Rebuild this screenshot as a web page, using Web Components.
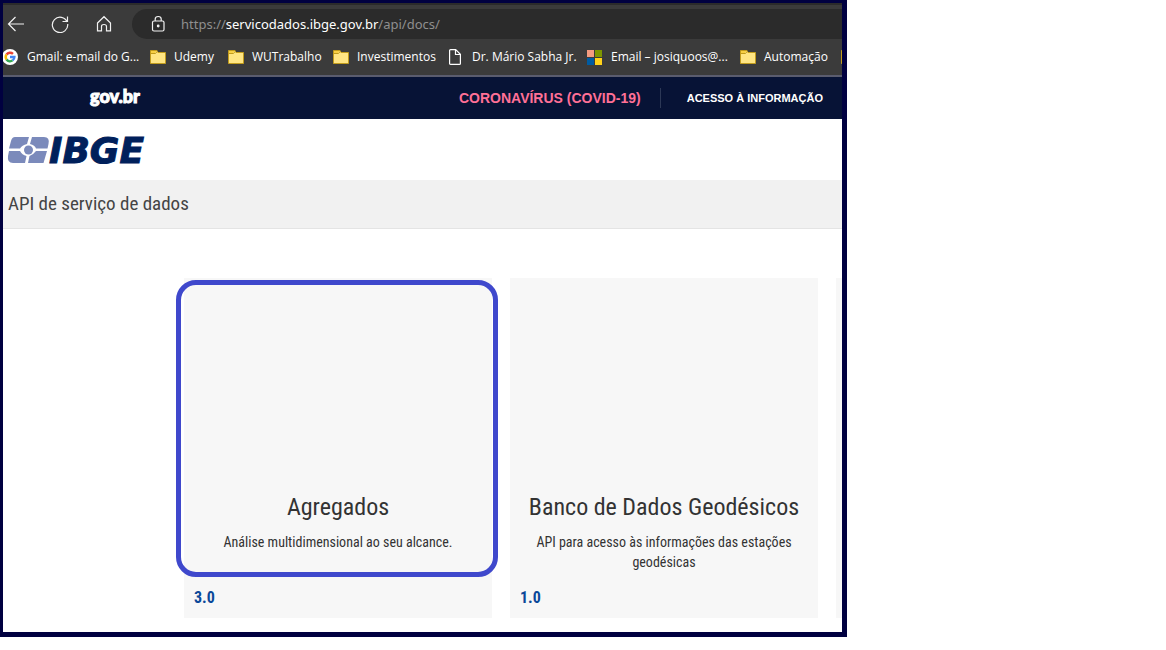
<!DOCTYPE html>
<html lang="pt-BR">
<head>
<meta charset="utf-8">
<title>API de serviço de dados</title>
<style>
  body { margin: 0; background: #fff; font-family: "Roboto Condensed", "Liberation Sans Narrow", Roboto, sans-serif; color: #333; }
</style>
</head>
<body>
<window-frame>
  <browser-toolbar></browser-toolbar>
  <bookmarks-bar>
    <bookmark-link kind="google">Gmail: e-mail do G...</bookmark-link>
    <bookmark-link kind="folder">Udemy</bookmark-link>
    <bookmark-link kind="folder">WUTrabalho</bookmark-link>
    <bookmark-link kind="folder">Investimentos</bookmark-link>
    <bookmark-link kind="page">Dr. Mário Sabha Jr.</bookmark-link>
    <bookmark-link kind="tiles">Email – josiquoos@...</bookmark-link>
    <bookmark-link kind="folder">Automação</bookmark-link>
    <bookmark-link kind="folder"></bookmark-link>
  </bookmarks-bar>
  <gov-bar></gov-bar>
  <site-header>API de serviço de dados</site-header>
  <api-list>
    <api-card marked version="3.0"><span slot="title">Agregados</span>Análise multidimensional ao seu alcance.</api-card>
    <api-card version="1.0"><span slot="title">Banco de Dados Geodésicos</span>API para acesso às informações das estações geodésicas</api-card>
    <api-card></api-card>
  </api-list>
</window-frame>

<script>
function define(name, html) {
  customElements.define(name, class extends HTMLElement {
    constructor() {
      super();
      this.attachShadow({ mode: "open" }).innerHTML = html;
    }
  });
}

define("window-frame", `
  <style>
    :host { display: block; box-sizing: border-box; width: 100%; max-width: 847px; overflow: hidden;
      border: solid #000040; border-width: 3px 5px 5px 3px; background: #fff; }
  </style>
  <slot></slot>`);

define("browser-toolbar", `
  <style>
    :host { display: flex; align-items: center; padding: 4px 0 0 1px; border-top: 2px solid #2b2b2b; background: #3b3b3b; }
    nav { display: flex; gap: 20px; padding-right: 16px; }
    button { width: 24px; height: 24px; padding: 0; border: 0; background: none; display: grid; place-items: center; }
    svg { display: block; fill: none; stroke: #f2f2f2; stroke-width: 1.2; }
    label { flex: 1; display: flex; align-items: center; gap: 15px; height: 30px; padding-left: 18px;
      border-radius: 15px 0 0 15px; background: #2b2b2b; }
    .url { font: 13px/20px "Noto Sans", sans-serif; color: #8f8f8f; white-space: nowrap; }
    b { font-weight: 400; color: #fff; }
  </style>
  <nav>
    <button aria-label="Voltar"><svg width="18" height="18"><path d="M17 9H1.5M8.5 2L1.5 9L8.5 16"/></svg></button>
    <button aria-label="Atualizar"><svg width="18" height="18"><path d="M16.2 7A7.7 7.7 0 1 0 16.7 9M16.5 1.5V6.5H11.5"/></svg></button>
    <button aria-label="Início"><svg width="16" height="18"><path d="M1.5 8L8 1.7L14.5 8V15.8H10.5V11.5Q10.5 9.5 8 9.5T5.5 11.5V15.8H1.5Z"/></svg></button>
  </nav>
  <label><svg width="16" height="18"><rect x="2.5" y="6" width="11.5" height="10" rx="1.5"/><path d="M5.2 6V4Q5.2 1.5 8.2 1.5T11.2 4V6"/><circle cx="8.2" cy="11" r=".8" fill="#fff"/></svg>
    <span class="url">https://<b>servicodados.ibge.gov.br</b>/api/docs/</span></label>`);

define("bookmarks-bar", `
  <style>
    :host { display: grid; grid-template-columns: 147px 78px 105px 115px 139px 153px 101px 60px; align-items: center;
      height: 36px; border-bottom: 2px solid #5a5c6e; background: #3b3b3b; }
  </style>
  <slot></slot>`);

const ICONS = {
  google: `<circle cx="7" cy="9" r="8" fill="#fff"/><g transform="translate(-1)" fill="none" stroke-width="2.4"><path stroke="#ea4335" d="M4.5 6.5A4.4 4.4 0 0 1 11 5.8"/><path stroke="#fbbc05" d="M4.5 6.5A4.4 4.4 0 0 0 4.5 11.5"/><path stroke="#34a853" d="M4.5 11.5A4.4 4.4 0 0 0 10.6 12.4"/><path stroke="#4285f4" d="M8 9H12.4A4.4 4.4 0 0 1 10.6 12.4"/></g>`,
  folder: `<path d="M.5 2.5H7L8 4.5H15.5V15.5H.5Z" fill="#ffe583" stroke="#c19b1c"/><path d="M1 5.5H5.5L7.5 3" fill="none" stroke="#c19b1c"/><path d="M1 3H6.5L5 5H1Z" fill="#f8cf43"/>`,
  page: `<path d="M1.6 2.6Q1.6 1.6 2.6 1.6H7.7L12.4 6.3V15.4Q12.4 16.4 11.4 16.4H2.6Q1.6 16.4 1.6 15.4ZM7.5 2V6.5H12" fill="none" stroke="#fff" stroke-width="1.2"/>`,
  tiles: `<path fill="#f49c80" d="M0 2H7V9H0Z"/><path fill="#7e9600" d="M8 2H15V9H8Z"/><path fill="#005ba1" d="M0 10H7V17H0Z"/><path fill="#ffd21a" d="M8 10H15V17H8Z"/>`
};
customElements.define("bookmark-link", class extends HTMLElement {
  constructor() {
    super();
    this.attachShadow({ mode: "open" }).innerHTML = `
      <style>
        :host { display: block; }
        a { display: flex; align-items: center; gap: 8px; color: #fff; text-decoration: none;
          font: 12px/18px "Open Sans", sans-serif; white-space: nowrap; }
        svg { flex: none; display: block; }
      </style>
      <a href="#"><svg width="16" height="18">${ICONS[this.getAttribute("kind")]}</svg><slot></slot></a>`;
  }
});

define("gov-bar", `
  <style>
    :host { display: flex; align-items: center; height: 42px; padding: 0 19px 0 87px; background: #071336;
      font-family: "Liberation Sans", sans-serif; font-weight: 700; white-space: nowrap; box-sizing: border-box; }
    a { color: #fff; text-decoration: none; font-size: 11px; line-height: 20px; }
    .gov { margin-right: auto; padding-bottom: 4px; font: 900 18px/20px Lato, sans-serif; -webkit-text-stroke: 1px #fff; }
    .covid { color: #ff7096; font-size: 14px; padding-right: 19px; margin-right: 26px; border-right: 1px solid #2c3856; }
  </style>
  <a class="gov" href="#">gov.br</a>
  <a class="covid" href="#">CORONAVÍRUS (COVID-19)</a>
  <a href="#">ACESSO À INFORMAÇÃO</a>`);

define("site-header", `
  <style>
    :host { display: block; }
    .brand { height: 61px; display: flex; align-items: center; padding-left: 5px; }
    svg { display: block; overflow: visible; }
    text { font: italic 700 36px "DejaVu Sans", sans-serif; fill: #00205b; stroke: #00205b; stroke-width: 1; }
    h1 { margin: 0; padding: 12px 5px; border-bottom: 1px solid #e4e4e4; background: #f1f1f1;
      color: #444; font-size: 19px; line-height: 24px; font-weight: 400; }
  </style>
  <a class="brand" href="#" aria-label="IBGE"><svg width="150" height="28">
    <g fill="#7b8abb"><path d="M7 1H21L19 8Q14 9 12 12.5H1L3 5Q4 1 7 1Z"/><path d="M24 1H36Q42 1 40.500 8L39.500 12.500H28Q27 9 22 8Z"/><path d="M1 15H12Q14 19 18.500 20L17 27H5Q-1 27 0 20Z"/><path d="M39 15H28Q25 19 21.500 20L20 27H35.500Z"/><circle cx="20.500" cy="14" r="4.500"/></g>
    <text x="41" y="27">IBGE</text></svg></a>
  <h1><slot></slot></h1>`);

define("api-list", `
  <style>
    :host { display: grid; grid-auto-flow: column; grid-auto-columns: 308px; gap: 18px; padding: 49px 0 14px 181px; }
  </style>
  <slot></slot>`);

customElements.define("api-card", class extends HTMLElement {
  constructor() {
    super();
    const version = this.getAttribute("version");
    this.attachShadow({ mode: "open" }).innerHTML = `
      <style>
        :host { display: flex; flex-direction: column; position: relative; box-sizing: border-box; min-height: 340px;
          padding: 212px 10px 10px; background: #f7f7f7; text-align: center; }
        :host([marked])::after { content: ""; position: absolute; inset: 2px -6px 41px -8px;
          border: 5px solid #3f48cc; border-radius: 20px; }
        h2 { margin: 0 0 8px; font-size: 24px; line-height: 34px; font-weight: 400; white-space: nowrap; }
        p { margin: 0; font-size: 14px; line-height: 20px; }
        a { margin-top: auto; text-align: left; font-size: 16px; line-height: 20px; font-weight: 700; color: #0b4899; text-decoration: none; }
      </style>
      <h2><slot name="title"></slot></h2>
      <p><slot></slot></p>
      ${version ? `<a href="#">${version}</a>` : ""}`;
  }
});
</script>
</body>
</html>
